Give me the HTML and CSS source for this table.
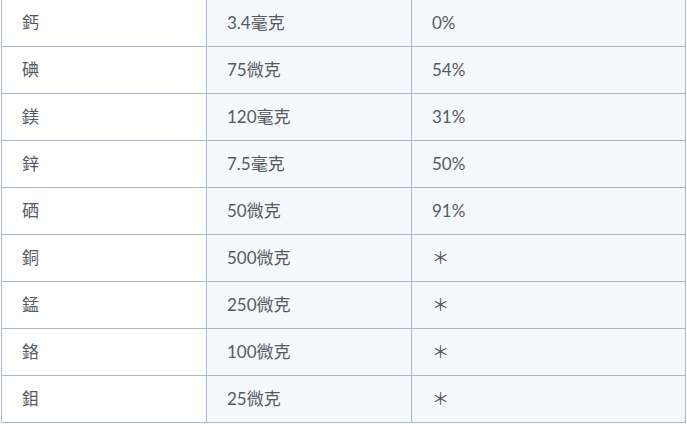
FILE: index.html
```html
<!DOCTYPE html>
<html lang="zh-Hant">
<head>
<meta charset="utf-8">
<link rel="stylesheet" href="styles.css">
</head>
<body>
<table class="nutri">
<tbody>
<tr><td class="name">鈣</td><td class="amt">3.4毫克</td><td class="pct">0%</td></tr>
<tr><td class="name">碘</td><td class="amt">75微克</td><td class="pct">54%</td></tr>
<tr><td class="name">鎂</td><td class="amt">120毫克</td><td class="pct">31%</td></tr>
<tr><td class="name">鋅</td><td class="amt">7.5毫克</td><td class="pct">50%</td></tr>
<tr><td class="name">硒</td><td class="amt">50微克</td><td class="pct">91%</td></tr>
<tr><td class="name">銅</td><td class="amt">500微克</td><td class="pct">＊</td></tr>
<tr><td class="name">錳</td><td class="amt">250微克</td><td class="pct">＊</td></tr>
<tr><td class="name">鉻</td><td class="amt">100微克</td><td class="pct">＊</td></tr>
<tr><td class="name">鉬</td><td class="amt">25微克</td><td class="pct">＊</td></tr>
</tbody>
</table>
</body>
</html>
```

FILE: styles.css
```css
html, body {
  margin: 0;
  padding: 0;
  background: #ffffff;
}
body {
  padding-left: 1px;
  font-family: "Lato", "Noto Sans CJK TC", sans-serif;
  font-size: 17px;
  color: #555a5f;
}
.nutri {
  border-collapse: collapse;
  margin-top: -1px;
  width: 685px;
  table-layout: fixed;
}
.nutri td {
  border: 1px solid #a9b9cb;
  height: 47px;
  padding: 0 0 0 20px;
  box-sizing: border-box;
  vertical-align: middle;
  line-height: 20px;
}
.nutri td.name {
  width: 205px;
  background: #ffffff;
}
.nutri td.amt {
  width: 205px;
  background: #f4f9fe;
}
.nutri td.pct {
  background: #f4f9fe;
}
```
